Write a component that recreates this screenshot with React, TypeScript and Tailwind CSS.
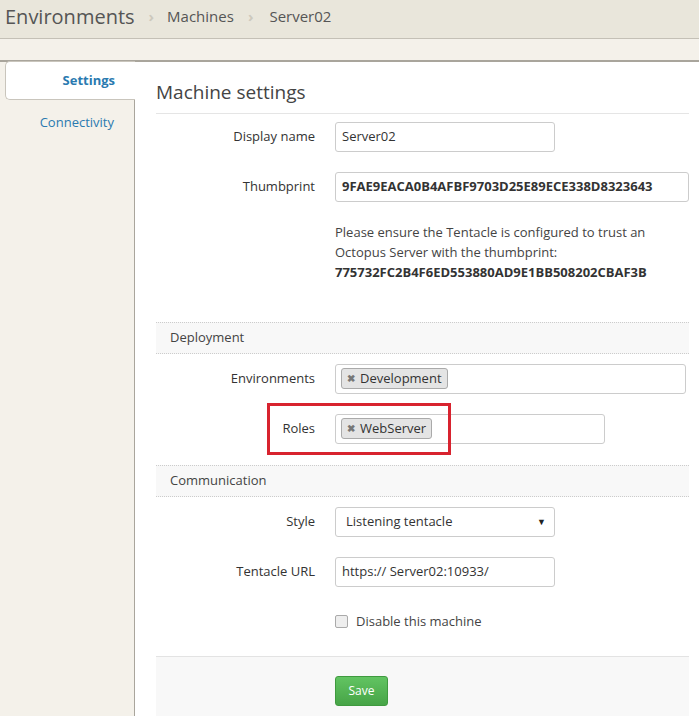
import React from 'react';

const Label: React.FC<{ children: React.ReactNode }> = ({ children }) => (
  <div className="w-[200px] shrink-0 pr-[20px] text-right text-[13px] text-[#333]">{children}</div>
);

const Tag: React.FC<{ text: string }> = ({ text }) => (
  <span className="inline-flex items-center h-[21px] px-[5px] rounded-[3px] border border-[#aaa] bg-[#e4e4e4] text-[13px] text-[#333]">
    <span className="text-[10px] font-bold text-[#777] mr-[5px]">✖</span>
    {text}
  </span>
);

const SectionHeader: React.FC<{ title: string }> = ({ title }) => (
  <div className="ml-[21px] mr-[10px] h-[32px] flex items-center pl-[14px] bg-[#f8f8f8] border-y border-dotted border-[#ccc] text-[13px] text-[#444]">
    {title}
  </div>
);

export default function App() {
  return (
    <div className="w-[699px] h-[716px] overflow-hidden bg-[#f4f1ea] text-[#333]" style={{ fontFamily: '"Open Sans", "Liberation Sans", sans-serif' }}>
      {/* header */}
      <div className="h-[39px] bg-[#e9e6db] border-b border-[#c4c0b6] flex items-center pl-[5px] pb-[5px]">
        <span className="text-[20px] text-[#555]">Environments</span>
        <span className="ml-[14px] mr-[13px] text-[15px] text-[#cdc9bd] font-bold">›</span>
        <span className="text-[15px] text-[#555]">Machines</span>
        <span className="ml-[14px] mr-[16px] text-[15px] text-[#cdc9bd] font-bold">›</span>
        <span className="text-[15px] text-[#555]">Server02</span>
      </div>

      <div className="h-[21px]" />

      <div className="flex border-t-2 border-[#a9a59c] h-[656px]">
        {/* sidebar */}
        <div className="w-[135px] shrink-0 border-r border-[#a9a59c]">
          <div className="ml-[5px] -mr-px mt-[-1px] h-[39px] bg-white border border-[#c9c5bc] border-r-0 rounded-l-[5px] flex items-center justify-end pr-[20px] text-[13px] font-bold text-[#2a7ab0]">
            Settings
          </div>
          <div className="mt-[13px] pr-[20px] text-right text-[13px] text-[#2a7ab0]">Connectivity</div>
        </div>

        {/* content */}
        <div className="flex-1 bg-white">
          <div className="ml-[21px] mr-[10px] pt-[16px] pb-[6px] border-b border-[#e5e5e5] text-[19px] text-[#444]">
            Machine settings
          </div>

          <div className="flex items-center mt-[8px]">
            <Label>Display name</Label>
            <div className="w-[220px] h-[30px] border border-[#ccc] rounded-[3px] flex items-center px-[6px] text-[13px]">Server02</div>
          </div>

          <div className="flex items-center mt-[20px]">
            <Label>Thumbprint</Label>
            <div className="w-[354px] h-[30px] border border-[#ccc] rounded-[3px] flex items-center px-[6px] text-[13px] font-bold">
              9FAE9EACA0B4AFBF9703D25E89ECE338D8323643
            </div>
          </div>

          <div className="ml-[200px] mt-[20px] text-[13px] leading-[20px] text-[#444]">
            Please ensure the Tentacle is configured to trust an
            <br />
            Octopus Server with the thumbprint:
            <br />
            <span className="font-bold text-[#333]">775732FC2B4F6ED553880AD9E1BB508202CBAF3B</span>
          </div>

          <div className="mt-[40px]">
            <SectionHeader title="Deployment" />
          </div>

          <div className="flex items-center mt-[10px]">
            <Label>Environments</Label>
            <div className="w-[351px] h-[30px] border border-[#ccc] rounded-[3px] flex items-center px-[5px]">
              <Tag text="Development" />
            </div>
          </div>

          <div className="relative flex items-center mt-[20px]">
            <div className="absolute left-[132px] top-[-11px] w-[184px] h-[52px] border-[3px] border-[#d8232f]" />
            <Label>Roles</Label>
            <div className="w-[270px] h-[30px] border border-[#ccc] rounded-[3px] flex items-center px-[5px]">
              <Tag text="WebServer" />
            </div>
          </div>

          <div className="mt-[21px]">
            <SectionHeader title="Communication" />
          </div>

          <div className="flex items-center mt-[10px]">
            <Label>Style</Label>
            <div className="w-[220px] h-[30px] border border-[#ccc] rounded-[3px] flex items-center justify-between pl-[10px] pr-[8px] text-[13px]">
              <span>Listening tentacle</span>
              <span className="text-[9px] text-[#222]">▼</span>
            </div>
          </div>

          <div className="flex items-center mt-[20px]">
            <Label>Tentacle URL</Label>
            <div className="w-[220px] h-[30px] border border-[#ccc] rounded-[3px] flex items-center px-[6px] text-[13px]">
              https:// Server02:10933/
            </div>
          </div>

          <div className="flex items-center ml-[200px] mt-[25px] text-[13px] text-[#444]">
            <span className="w-[13px] h-[13px] border border-[#aaa] rounded-[2px] bg-[#eee] mr-[8px]" />
            Disable this machine
          </div>

          <div className="ml-[21px] mr-[10px] mt-[25px] h-[100px] bg-[#f8f8f8] border-t border-[#e3e3e3] pt-[19px] pl-[179px]">
            <button className="w-[53px] h-[30px] rounded-[3px] border border-[#3f9a3f] bg-gradient-to-b from-[#62c462] to-[#47a447] text-white text-[12px]">
              Save
            </button>
          </div>
        </div>
      </div>
    </div>
  );
}
